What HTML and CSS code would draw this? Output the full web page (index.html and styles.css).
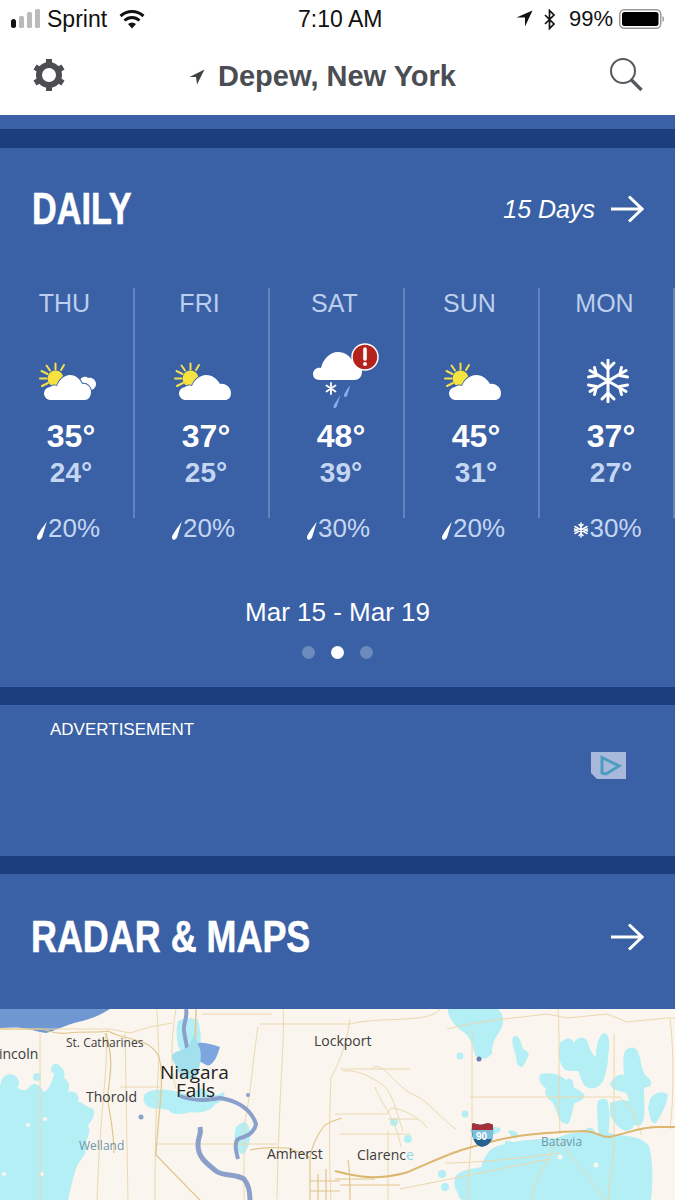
FILE: index.html
```html
<!DOCTYPE html>
<html lang="en">
<head>
    <meta charset="UTF-8">
    <meta name="viewport" content="width=device-width, initial-scale=1.0">
    <title>Depew, New York - Daily</title>
    <link rel="stylesheet" href="styles.css">
</head>
<body>
    <svg class="defs" width="0" height="0">
        <symbol id="sun" viewBox="0 0 60 40">
            <g stroke="#f4e04d" stroke-width="2" stroke-linecap="round">
                <path d="M16.500 3.500v6M7.500 5.500l3.500 5M25 5l-3 5M2.500 11l6 3M1 18.500h6.500M3 26l6-3"/>
            </g>
            <circle cx="16.500" cy="18.500" r="8" fill="#f7e33f"/>
        </symbol>
        <symbol id="partly" viewBox="0 0 60 40">
            <use href="#sun" width="60" height="40"/>
            <path d="M12 40a6.500 6.500 0 0 1-1-13c1-1 4-2 7-1 2-6 8-11 14-11 7 0 12 5 14 9 6-1 11 4 11 9s-3 7-6 7z" fill="#fff" stroke="#3a60a5" stroke-width="2" paint-order="stroke"/>
        </symbol>
        <symbol id="partly-more" viewBox="0 0 60 40">
            <use href="#sun" width="60" height="40"/>
            <path d="M41 20c2-4 6-4 8-2 4-1 8 2 8 6s-4 7-8 6z" fill="#fff"/>
            <path d="M12 40a6.500 6.500 0 0 1-1-13c1-1 4-2 7-1 2-6 7-11 13-11 6 0 11 5 12 9 5-1 9 3 9 8s-3 8-6 8z" fill="#fff" stroke="#3a60a5" stroke-width="2" paint-order="stroke"/>
        </symbol>
        <symbol id="drop" viewBox="0 0 12 18">
            <path d="M11 0.500C8 5 4 10 2 14c-1 3 1 4.500 2.500 3.500 1.500-0.500 2-2 2.500-3.500z" fill="#fff"/>
        </symbol>
        <symbol id="flake" viewBox="0 0 44 44">
            <g fill="none" stroke="#fff" stroke-width="3" stroke-linecap="round" stroke-linejoin="round">
                <path d="M22 1v42M4 11.500l36 21M4 32.500l36-21"/>
                <path d="M16 4l6 6 6-6M16 40l6-6 6 6"/>
                <path d="M2.500 18l8-1.500-2-8M41.500 26l-8 1.500 2 8M2.500 26l8 1.500-2 8M41.500 18l-8-1.500 2-8"/>
            </g>
        </symbol>
        <symbol id="flake-small" viewBox="0 0 16 16">
            <g fill="none" stroke="#fff" stroke-width="1.500" stroke-linecap="round">
                <path d="M8 1v14M2 4.500l12 7M2 11.500l12-7"/>
                <path d="M6 2.500l2 2 2-2M6 13.500l2-2 2 2M1.500 7l3 1-3 1M14.500 7l-3 1 3 1"/>
            </g>
        </symbol>
    </svg>

    <div class="status-bar">
        <div class="carrier">
            <svg class="signal" width="29" height="20" viewBox="0 0 29 20">
                <rect x="0" y="10" width="5" height="9" rx="2.500" fill="#111"/>
                <rect x="8" y="7" width="5" height="12" rx="1.500" fill="#bbb"/>
                <rect x="16" y="3" width="5" height="16" rx="1.500" fill="#bbb"/>
                <rect x="24" y="0" width="5" height="19" rx="1.500" fill="#bbb"/>
            </svg>
            <span>Sprint</span>
            <svg width="26" height="20" viewBox="0 0 26 20">
                <g fill="none" stroke="#111" stroke-width="3">
                    <path d="M1.500 7c7-6 16-6 23 0"/>
                    <path d="M5.500 11.500c4.500-4 10.500-4 15 0"/>
                </g>
                <path d="M9 15c2.500-2 5.500-2 8 0l-4 4.500z" fill="#111"/>
            </svg>
        </div>
        <div class="clock">7:10 AM</div>
        <div class="sys">
            <svg class="sys-arrow" width="17" height="18" viewBox="0 0 17 18"><path d="M16.500 0.500L0.500 7.500h8.500v9z" fill="#111"/></svg>
            <svg class="sys-bt" width="13" height="21" viewBox="0 0 13 21"><path d="M2 6l9 9-4.500 4.500V1.500L11 6l-9 9" fill="none" stroke="#111" stroke-width="1.700"/></svg>
            <span>99%</span>
            <svg width="46" height="20" viewBox="0 0 46 20">
                <rect x="0.750" y="0.750" width="41" height="18.500" rx="4.500" fill="none" stroke="#999" stroke-width="1.500"/>
                <rect x="3" y="3" width="36.500" height="14" rx="2.500" fill="#000"/>
                <path d="M43.500 7c2 0.500 2 5.500 0 6z" fill="#999"/>
            </svg>
        </div>
    </div>

    <nav class="nav">
        <svg class="gear" width="34" height="34" viewBox="0 0 34 34">
            <circle cx="17" cy="17" r="10" fill="none" stroke="#4c4e52" stroke-width="6"/>
            <g stroke="#4c4e52" stroke-width="6">
                <path d="M17 1v6M17 27v6M3 9l5 3M26 22l5 3M3 25l5-3M26 12l5-3"/>
            </g>
        </svg>
        <div class="place">
            <svg width="16" height="16" viewBox="0 0 16 16"><path d="M15.500 0.500L0.500 8h6.500l1 7.500z" fill="#3f4245"/></svg>
            <span>Depew, New York</span>
        </div>
        <svg class="search" width="34" height="34" viewBox="0 0 34 34">
            <circle cx="14" cy="13" r="12" fill="none" stroke="#55585c" stroke-width="2"/>
            <path d="M22.500 22l10 10" stroke="#55585c" stroke-width="3.400"/>
        </svg>
    </nav>

    <div class="strip"></div>
    <div class="rule rule-top"></div>

    <section class="daily">
        <div class="head">
            <h2 class="title title-daily">DAILY</h2>
            <div class="more">
                <span>15 Days</span>
                <svg class="arrow" width="34" height="28" viewBox="0 0 34 28"><path d="M1 14h31M19 1.500L32 14 19 26.500" fill="none" stroke="#fff" stroke-width="3"/></svg>
            </div>
        </div>

        <div class="days">
            <div class="day">
                <div class="day-main">
                    <div class="day-name">THU</div>
                    <div class="day-icon"><svg width="60" height="40"><use href="#partly-more"/></svg></div>
                    <div class="hi">35°</div>
                    <div class="lo">24°</div>
                </div>
                <div class="precip"><svg width="13" height="19"><use href="#drop"/></svg><span>20%</span></div>
            </div>
            <div class="day">
                <div class="day-main">
                    <div class="day-name">FRI</div>
                    <div class="day-icon"><svg width="60" height="40"><use href="#partly"/></svg></div>
                    <div class="hi">37°</div>
                    <div class="lo">25°</div>
                </div>
                <div class="precip"><svg width="13" height="19"><use href="#drop"/></svg><span>20%</span></div>
            </div>
            <div class="day">
                <div class="day-main">
                    <div class="day-name">SAT</div>
                    <div class="day-icon">
                        <svg class="storm" width="60" height="70" viewBox="0 0 60 70">
                            <path d="M11 38c-5 0-7-3-7-6 0-4 4-7 8-6 2-9 9-16 17-16 7 0 13 4 15 11 5-1 9 2 9 8 0 6-3 9-8 9z" fill="#fff"/>
                            <g stroke="#fff" stroke-width="1.800" stroke-linecap="round"><path d="M22 41v11M17.500 43.500l9 6M17.500 49.500l9-6"/></g>
                            <path d="M31 53c-2 4-5 8-6.500 11-0.500 2 2 3 3 1 1-3 3-8 3.500-12zM41 43c-2 3-5 7-6 10-0.500 2 2 3 3 1 1-3 2.500-7 3-11z" fill="#7fb2e8"/>
                        </svg>
                        <svg class="alert" width="28" height="28" viewBox="0 0 28 28">
                            <circle cx="14" cy="14" r="13" fill="#b5211c" stroke="#fff" stroke-width="1.500"/>
                            <path d="M14 6v10" stroke="#fff" stroke-width="3.600" stroke-linecap="round"/>
                            <circle cx="14" cy="21" r="2" fill="#fff"/>
                        </svg>
                    </div>
                    <div class="hi">48°</div>
                    <div class="lo">39°</div>
                </div>
                <div class="precip"><svg width="13" height="19"><use href="#drop"/></svg><span>30%</span></div>
            </div>
            <div class="day">
                <div class="day-main">
                    <div class="day-name">SUN</div>
                    <div class="day-icon"><svg width="60" height="40"><use href="#partly"/></svg></div>
                    <div class="hi">45°</div>
                    <div class="lo">31°</div>
                </div>
                <div class="precip"><svg width="13" height="19"><use href="#drop"/></svg><span>20%</span></div>
            </div>
            <div class="day">
                <div class="day-main">
                    <div class="day-name">MON</div>
                    <div class="day-icon"><svg class="flake" width="44" height="44"><use href="#flake"/></svg></div>
                    <div class="hi">37°</div>
                    <div class="lo">27°</div>
                </div>
                <div class="precip"><svg class="precip-snow" width="16" height="16"><use href="#flake-small"/></svg><span>30%</span></div>
            </div>
        </div>

        <div class="range">Mar 15 - Mar 19</div>
        <div class="dots">
            <span class="dot"></span>
            <span class="dot active"></span>
            <span class="dot"></span>
        </div>
    </section>

    <div class="rule"></div>

    <section class="ad">
        <div class="ad-label">ADVERTISEMENT</div>
        <svg class="ad-mark" width="35" height="28" viewBox="0 0 35 28">
            <path d="M0 0h35v27H6l-6-6z" fill="#a9b9dc"/>
            <path d="M11 5.500l17 8.500-13 8-4-1z" fill="none" stroke="#4d9cc2" stroke-width="3"/>
        </svg>
    </section>

    <div class="rule"></div>

    <section class="radar">
        <h2 class="title title-radar">RADAR &amp; MAPS</h2>
        <svg class="arrow" width="34" height="28" viewBox="0 0 34 28"><path d="M1 14h31M19 1.500L32 14 19 26.500" fill="none" stroke="#fff" stroke-width="3"/></svg>
    </section>

    <div class="map">
        <svg width="675" height="191" viewBox="0 0 675 191">
            <rect width="675" height="191" fill="#faf5ee"/>
            <path d="M0 0h110c-8 5-18 10-32 13-12 3-26 10-32 11-8-1-16-4-24-5-8-1-15 0-22 0z" fill="#6f97d2"/>
            <!-- radar echoes -->
            <g fill="#b4eff6">
                <path d="M0 75c8-5 14-2 16 3 5 3 10 6 14-1 6-5 10 0 14 6 8-4 10-20 12-24 6-4 10 4 8 10 6 4 6 10 4 14 8-2 12 4 10 10 6 0 8 6 14 6 6 6-2 14-4 18 4 6-2 12-2 18 2 8-4 14-8 20-4 8-6 20-10 36H0z"/>
                <path d="M145 85c10-8 30-4 46 2 6-8 14-10 16-4 6 6 14 2 16 0 4 4 0 10-8 12-2 6-14 10-24 8-8 2-20 4-22-2-8-2-16 0-22-4-4-4-4-8-2-12z"/>
                <path d="M178 12c4-3 14-4 20-1 2 8 4 18 2 28-6 2-10 4-14 6-4-4-8-4-8-10-2-8-2-16 0-23z"/>
                <path d="M236 118c6-6 10-6 12-2 3 6 3 18-2 26-4 6-8 2-10-6-2-6-2-12 0-18z"/>
                <path d="M448 0h50c8 8 6 18-2 28-2 4-4 8-4 16-3 6-12 8-17 2-2-8-4-16-10-22-8-4-18-16-17-24z"/>
                <path d="M513 28c5-4 8 4 10 12 5 2 7 6 5 8-2 4-4 8-6 10-5 0-6-6-6-12-2-6-5-12-3-18z"/>
                <path d="M560 34c6-6 12-6 14 0 2-6 12-8 14 0 2 6 4 12 8 14 0-8 2-22 8-24 6 0 6 14 4 24 0 8-2 14-4 22-4 10-14 12-20 6-4-6-4-12-6-14-6 0-12 0-14-2-6-8-6-18-4-26z"/>
                <path d="M540 65c10-2 20 0 26 6 4-4 8 0 8 8 6 2 12 6 10 10-4 4-8 4-10 6-2 8-2 14-6 20-4 0-8-2-10-8-2-6-4-12-6-14-6-4-8-10-6-14-4-2-8-6-6-14z"/>
                <path d="M625 42c6-6 12-4 14 4 2 6 2 12 6 20 6 4 8 8 4 12-4 0-4 0-5 2 0 12 2 30-2 34-2 4-8 4-10-4-2-10-2-20-6-26-6-2-12-2-16-8 2-8 10-12 14-10 0-8-2-16 1-24z"/>
                <path d="M650 90c6-8 14-8 18-4-2 12-8 22-12 28-6 2-6-8-8-14z"/>
                <path d="M598 92c6-4 10-2 10 2 2 8 2 20 0 32-4 4-10 0-10-6 0-10-2-20 0-28z"/>
                <path d="M610 94c10-4 22-4 28 4 2 10-2 20-10 24-8 0-14-8-18-16z"/>
                <path d="M455 168c6-8 18-8 26-10 2-8 8-18 14-20 14-6 40-8 62-9 16-8 34-6 50-4 14 2 32 0 42 12 4 14 4 34 2 54H462c-4-2-4-8-6-10-2-4-2-9-1-13z"/>
                <path d="M586 120c5-3 10 0 9 7-2 4-8 4-10 0zM603 125c8-2 14 0 14 6-4 4-12 4-14 0z"/>
                <circle cx="460" cy="47" r="3.500"/>
                <circle cx="465" cy="105" r="3.500"/>
                <circle cx="394" cy="113" r="4"/>
                <circle cx="408" cy="130" r="4"/>
                <path d="M505 132c4 0 8 0 8 4-1 2-6 4-8 1zM508 122c6-2 10 2 10 5-2 4-6 3-10-5z"/>
                <path d="M470 120c6-3 20-4 30-1 4 4-8 8-20 10-6 0-10-4-10-9z"/>
                <circle cx="445" cy="178" r="4"/>
                <circle cx="442" cy="165" r="4"/>
                <circle cx="56" cy="60" r="5"/>
                <circle cx="10" cy="74" r="9"/>
                <circle cx="37" cy="68" r="4"/>
            </g>
            <g fill="#faf5ee">
                <circle cx="28" cy="116" r="2"/>
                <circle cx="45" cy="110" r="2"/>
                <circle cx="4" cy="165" r="2"/>
                <circle cx="42" cy="165" r="2"/>
                <circle cx="560" cy="148" r="2.500"/>
                <circle cx="596" cy="156" r="2.500"/>
            </g>
            <!-- minor roads -->
            <g fill="none" stroke="#ecd8ae" stroke-width="1">
                <path d="M0 20h110l20 4 20-6 22-4M40 24v167M105 24c5 25-4 60-8 167M125 24l3 167M157 0l2 50c-2 30-4 70-4 141M120 78l40 0M157 135h120M176 0c-5 30-6 60 0 80M196 0v60M258 18c-5 30-6 60-14 100l0 73M283 0c2 30-4 80-6 190M350 10c-4 30-14 50-20 60M331 70c-2 40-2 80 0 121M202 5h70M260 15h90c30-8 80 0 90-15"/>
                <path d="M340 60h70M335 105h52l4-6c10 0 30 10 36 20M372 60c10-10 20 14 40 25 16 6 30 26 44 35M343 62c14-2 28 6 40 14 10 8 14 30 20 46M388 122v69M388 110h30M340 125l70 0M375 78c8 20 20 30 26 60"/>
                <path d="M472 20v95c0 20-4 40-4 76M470 88h150l12 14 10 24M447 20c30-8 60-10 100-15l20 4 40-4 20 8 40-4h30M558 0c2 30 0 60 2 125M614 25v100c0 30-4 40-6 66M670 10c4 30 4 80 0 110"/>
                <path d="M558 130c-14 30-24 40-26 61M558 130c14 20 34 40 46 61M445 154c30 0 80-5 115-10M400 180c50-10 100-20 150-30"/>
            </g>
            <!-- main roads -->
            <g fill="none" stroke="#e2c58a" stroke-width="1.200">
                <path d="M0 20h42c8 2 14 6 26 4 16-2 32 0 40-2 18 10 40 6 50 24 8 18 0 60-2 100l74 76M106 24c8 30 4 40 2 60-2 10 6 30 6 60"/>
                <path d="M250 141c16-4 24-2 38-2 8 4 14 4 22 10 2-14 8-24 14-32 4-4 12-6 18-8M310 149v42M340 176h60M318 165v26M326 160v31M310 172h30M310 182h30"/>
                <path d="M335 162c30 8 45 8 70 2 20-8 40-18 60-24 40-12 60-16 120-18 16 2 14 6 24 6 20-4 30-10 50-10h16" stroke="#dcb66f" stroke-width="2"/>
                <path d="M196 0c0 10-2 30 0 40M335 170h40M350 191c0-10 0-30-2-40"/>
            </g>
            <!-- river -->
            <g fill="none" stroke="#8aa0ca" stroke-width="4" stroke-linejoin="round">
                <path d="M186 0c2 8-3 14-2 22 1 8 3 14 3 18"/>
                <path d="M180 87c16 6 28 4 40 2 12 2 30 8 36 26-2 10-10 12-18 15-4 4-2 12 0 20"/>
                <path d="M200 118c2 8-2 8-2 18 0 12 8 18 18 26 8 6 18 2 28 8 5 6 6 14 6 21" stroke-width="5"/>
            </g>
            <path d="M194 36c4-4 14-2 26 2-2 6-4 14-10 18-4 2-8-4-12-4z" fill="#7da6e0"/>
            <path d="M172 46c6-6 12-4 16-8l6-12c3 4 4 10 6 14 2 6 0 20-4 28-8 4-14 2-18-6-2-6-6-10-6-16z" fill="#a3e0ee"/>
            <circle cx="141" cy="108" r="2.500" fill="#8ea0cf"/>
            <circle cx="248" cy="86" r="2" fill="#8ea0cf"/>
            <circle cx="479" cy="50" r="2.500" fill="#6c7ca8"/>
            <!-- labels -->
            <g class="map-label">
                <text x="-1" y="50" font-size="14">incoln</text>
                <text x="66" y="38" font-size="12">St. Catharines</text>
                <text font-size="19" class="city"><tspan x="160" y="70">Niagara</tspan><tspan x="176" y="88">Falls</tspan></text>
                <text x="86" y="93" font-size="14">Thorold</text>
                <text x="79" y="141" font-size="12" class="faded">Welland</text>
                <text x="267" y="150" font-size="14">Amherst</text>
                <text x="314" y="37" font-size="14">Lockport</text>
                <text x="357" y="151" font-size="14">Clarenc<tspan class="cyan">e</tspan></text>
                <text x="541" y="137" font-size="12" class="faded">Batavia</text>
            </g>
            <g>
                <path d="M472 116c0-2 2-2 4-1 4 1 6 1 8 0 3-1 5-1 7 0 2 0 2 1 2 3 1 10-1 18-11 20-9-2-11-12-10-22z" fill="#27628f"/>
                <path d="M472 116c0-2 2-2 4-1 4 1 6 1 8 0 3-1 5-1 7 0 2 0 2 1 2 3v3h-21z" fill="#a5303a"/>
                <path d="M472 121h21v9h-20z" fill="#7cc0dc"/>
                <text x="476" y="131" font-size="10" class="shield">90</text>
            </g>
        </svg>
    </div>
</body>
</html>
```

FILE: styles.css
```css
* {
    margin: 0;
    padding: 0;
    box-sizing: border-box;
}

body {
    font-family: 'Liberation Sans', Arial, sans-serif;
    background-color: #3a60a5;
    color: #fff;
    width: 675px;
    height: 1200px;
    overflow: hidden;
}

svg {
    display: block;
}

.defs {
    position: absolute;
}

.status-bar {
    height: 38px;
    background-color: #fff;
    color: #111;
    display: grid;
    grid-template-columns: 298px 97px 1fr;
    align-items: center;
    font-size: 23px;
}

.carrier {
    display: flex;
    align-items: center;
    padding-left: 11px;
    gap: 7px;
}

.carrier span {
    margin-right: 5px;
}

.clock {
    white-space: nowrap;
}

.sys {
    display: flex;
    align-items: center;
    justify-content: flex-end;
    padding-right: 10px;
    font-size: 22px;
}

.sys-arrow {
    margin-right: 10px;
}

.sys-bt {
    margin-right: 13px;
}

.sys span {
    margin-right: 6px;
}

.nav {
    height: 77px;
    background-color: #fff;
    display: flex;
    align-items: center;
    padding: 0 32px;
}

.gear {
    margin-top: -3px;
}

.place {
    display: flex;
    align-items: center;
    gap: 13px;
    margin-left: 123px;
    color: #4a4d52;
    font-size: 29px;
    font-weight: 700;
}

.search {
    margin-left: auto;
    margin-top: -4px;
}

.strip {
    height: 14px;
}

.rule {
    height: 18px;
    background-color: #1c3e7c;
}

.rule-top {
    height: 19px;
}

.daily {
    height: 539px;
    padding-top: 36px;
}

.head {
    display: flex;
    justify-content: space-between;
    align-items: center;
    height: 50px;
    padding: 0 31px 0 32px;
}

.title {
    font-size: 45px;
    font-weight: 700;
    line-height: 50px;
    white-space: nowrap;
    transform-origin: left center;
    -webkit-text-stroke: 0.6px #fff;
}

.title-daily {
    transform: scaleX(0.76);
}

.title-radar {
    transform: scaleX(0.798);
}

.more {
    display: flex;
    align-items: center;
    gap: 15px;
    font-size: 25px;
    font-style: italic;
}

.days {
    display: grid;
    grid-template-columns: repeat(5, 135px);
    margin-top: 54px;
}

.day-main {
    height: 230px;
    border-right: 2px solid #6383bb;
    text-align: center;
}

.day-name {
    font-size: 25px;
    line-height: 30px;
    color: #bccfee;
    padding-right: 4px;
}

.day-icon {
    position: relative;
    display: flow-root;
    height: 42px;
    margin-top: 42px;
    padding-left: 39px;
}

.storm {
    margin-top: -18px;
}

.alert {
    position: absolute;
    left: 81px;
    top: -17px;
}

.flake {
    margin-left: 7px;
    margin-top: -1px;
}

.hi {
    font-size: 32px;
    font-weight: 700;
    line-height: 36px;
    margin-top: 16px;
    padding-left: 9px;
}

.lo {
    font-size: 28px;
    font-weight: 700;
    line-height: 34px;
    margin-top: 2px;
    padding-left: 9px;
    color: #c5d6f3;
}

.precip {
    display: flex;
    justify-content: center;
    align-items: center;
    font-size: 26px;
    line-height: 30px;
    color: #c5d6f3;
    margin-top: -5px;
}

.precip svg {
    margin-top: 5px;
}

.precip .precip-snow {
    margin-top: 3px;
}

.range {
    text-align: center;
    font-size: 26px;
    line-height: 30px;
    margin-top: 54px;
}

.dots {
    display: flex;
    justify-content: center;
    gap: 16px;
    margin-top: 19px;
}

.dot {
    width: 13px;
    height: 13px;
    border-radius: 50%;
    background-color: #6c8abb;
}

.dot.active {
    background-color: #fff;
}

.ad {
    position: relative;
    height: 151px;
    padding: 14px 0 0 50px;
}

.ad-label {
    font-size: 17px;
    line-height: 21px;
}

.ad-mark {
    position: absolute;
    left: 591px;
    top: 47px;
}

.radar {
    height: 135px;
    display: flex;
    align-items: center;
    justify-content: space-between;
    padding: 0 31px 10px;
}

.map {
    height: 191px;
    overflow: hidden;
}

.map-label text {
    font-family: 'Open Sans', sans-serif;
    fill: #3c3c3c;
}

.map-label .city {
    fill: #222;
}

.map-label .faded {
    fill: #6f97a8;
}

.map-label .cyan {
    fill: #8fd8e8;
}

.shield {
    font-family: 'Liberation Sans', sans-serif;
    font-weight: 700;
    fill: #fff;
}
```
